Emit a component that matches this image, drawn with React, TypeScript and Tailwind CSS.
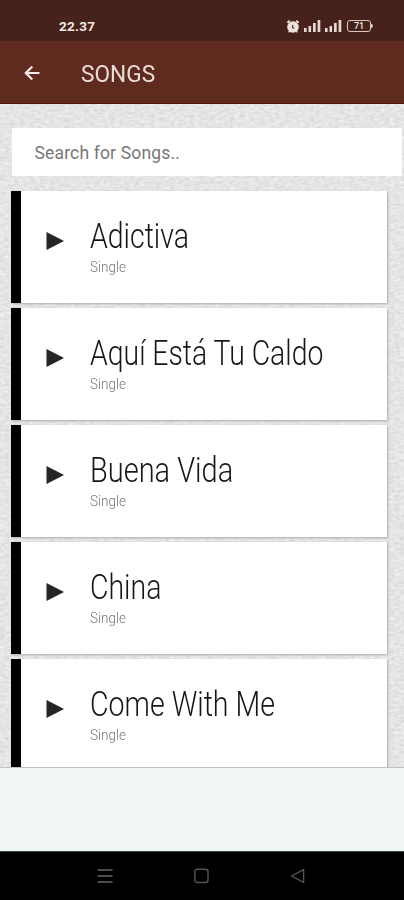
type Song = { title: string; scale: number };

const songs: Song[] = [
  { title: 'Adictiva', scale: 0.825 },
  { title: 'Aquí Está Tu Caldo', scale: 0.822 },
  { title: 'Buena Vida', scale: 0.84 },
  { title: 'China', scale: 0.825 },
  { title: 'Come With Me', scale: 0.828 },
];

function Signal() {
  return (
    <svg width="17" height="13" viewBox="0 0 17 13" fill="#e5d8d3">
      <rect x="0" y="9" width="2.6" height="4" />
      <rect x="4.5" y="7" width="2.6" height="6" />
      <rect x="9" y="4" width="2.7" height="9" />
      <rect x="13.6" y="1" width="2.7" height="12" />
    </svg>
  );
}

function StatusBar() {
  return (
    <div className="flex h-[41px] shrink-0 items-start bg-[#47211b] pl-[59px] pt-[18px] text-[#f2e9e6]">
      <span className="w-[227px] text-[13.5px] font-bold leading-[17px] tracking-[0.3px]">22.37</span>
      <svg className="mt-[1px]" width="14" height="15" viewBox="0 0 14 15" fill="#eee2dd">
        <circle cx="7" cy="8" r="5.8" />
        <path d="M1.4 3.7 3.8 1.7M10.2 1.7 12.6 3.7" stroke="#eee2dd" strokeWidth="2" />
        <path d="M3.6 12 2.7 13.4M10.4 12 11.3 13.4" stroke="#eee2dd" strokeWidth="1.4" />
        <path d="M6.6 6v2.6L8.2 9.4" stroke="#694039" strokeWidth="1.3" fill="none" />
      </svg>
      <span className="ml-[4px] mt-[1px]"><Signal /></span>
      <span className="ml-[4px] mt-[1px]"><Signal /></span>
      <div className="ml-[5px] mt-[2px] flex h-[12px] w-[24px] items-center justify-center rounded-[3px] border-[1.5px] border-[#d8c9c4] text-[9px] font-medium leading-none">
        71
      </div>
      <span className="mt-[6px] h-[4px] w-[2px] rounded-r bg-[#d8c9c4]" />
    </div>
  );
}

function AppBar() {
  return (
    <header className="flex h-[63px] shrink-0 items-center border-b border-[#58120e] bg-[#5f2b1e] pl-[24px] text-[#eadbd7]">
      <svg className="mt-[2px]" width="16" height="16" viewBox="0 0 16 16" fill="none" stroke="#f5ece9" strokeWidth="2.2">
        <path d="M8.3 1.5 1.8 8l6.5 6.5M1.6 8H15.5" />
      </svg>
      <h1 className="ml-[41px] mt-[5px] origin-left scale-x-[0.985] text-[23px] font-normal leading-7">SONGS</h1>
    </header>
  );
}

function PaperTexture() {
  return (
    <svg className="absolute inset-0 h-full w-full" aria-hidden="true">
      <filter id="paper" x="0" y="0" width="100%" height="100%" colorInterpolationFilters="sRGB">
        <feTurbulence type="fractalNoise" baseFrequency="0.2 0.36" numOctaves="3" seed="8" />
        <feColorMatrix values="0.14 0 0 0 0.826  0.14 0 0 0 0.826  0.14 0 0 0 0.826  0 0 0 0 1" />
      </filter>
      <rect width="100%" height="100%" filter="url(#paper)" />
    </svg>
  );
}

function SongCard({ title, scale }: Song) {
  return (
    <li className="flex h-[112px] shrink-0 border-l-[10.5px] border-black bg-white shadow-[1px_1px_2px_#aaa]">
      <svg className="ml-[25px] mt-[41px] shrink-0" width="18" height="18" viewBox="0 0 18 18">
        <path d="M0.5 0 18 9 0.5 18Z" fill="#252525" />
      </svg>
      <div className="ml-[25.5px] pt-[24px]">
        <div
          className="w-max origin-left whitespace-nowrap text-[34.5px] font-light leading-[42px] text-[#161616]"
          style={{ transform: `scaleX(${scale})` }}
        >
          {title}
        </div>
        <div className="w-max origin-left scale-x-[0.87] text-[15.5px] font-light leading-[20px] text-[#777]">Single</div>
      </div>
    </li>
  );
}

export default function App() {
  return (
    <div className="flex h-[900px] w-[404px] flex-col overflow-hidden font-[Roboto,'Liberation_Sans',sans-serif]">
      <StatusBar />
      <AppBar />
      <main className="relative h-[663px] shrink-0 overflow-hidden bg-[#e6e6e6]">
        <PaperTexture />
        <div className="relative flex flex-col pl-[11px] pt-[24px]">
          <input
            className="ml-px h-[48px] w-[390px] bg-white pl-[22.5px] pt-px text-[17.5px] tracking-[0.16px] text-[#666] placeholder:text-[#777]"
            placeholder="Search for Songs.."
            aria-label="Search for Songs"
          />
          <ul className="mt-[15px] flex w-[376px] flex-col gap-[5px]">
            {songs.map((song) => (
              <SongCard key={song.title} {...song} />
            ))}
          </ul>
        </div>
      </main>
      <div className="h-[84px] shrink-0 border-t border-[#bfc2c1] bg-[#f0f6f5]" />
      <nav className="flex h-[49px] shrink-0 items-start border-t border-[#444] bg-black pl-[97px] pt-[16px]">
        <svg width="16" height="16" viewBox="0 0 16 16" stroke="#4c4c4c" strokeWidth="2">
          <path d="M0.5 2H15.5M0.5 8H15.5M0.5 14H15.5" />
        </svg>
        <svg className="ml-[81px]" width="15" height="16" viewBox="0 0 15 16" fill="none" stroke="#555" strokeWidth="1.4">
          <rect x="0.8" y="1.3" width="13.2" height="13.2" rx="2.5" />
        </svg>
        <svg className="ml-[81px]" width="15" height="16" viewBox="0 0 15 16" fill="none" stroke="#555" strokeWidth="1.4">
          <path d="M13.6 1.6V14.4L1.5 8Z" strokeLinejoin="round" />
        </svg>
      </nav>
    </div>
  );
}
